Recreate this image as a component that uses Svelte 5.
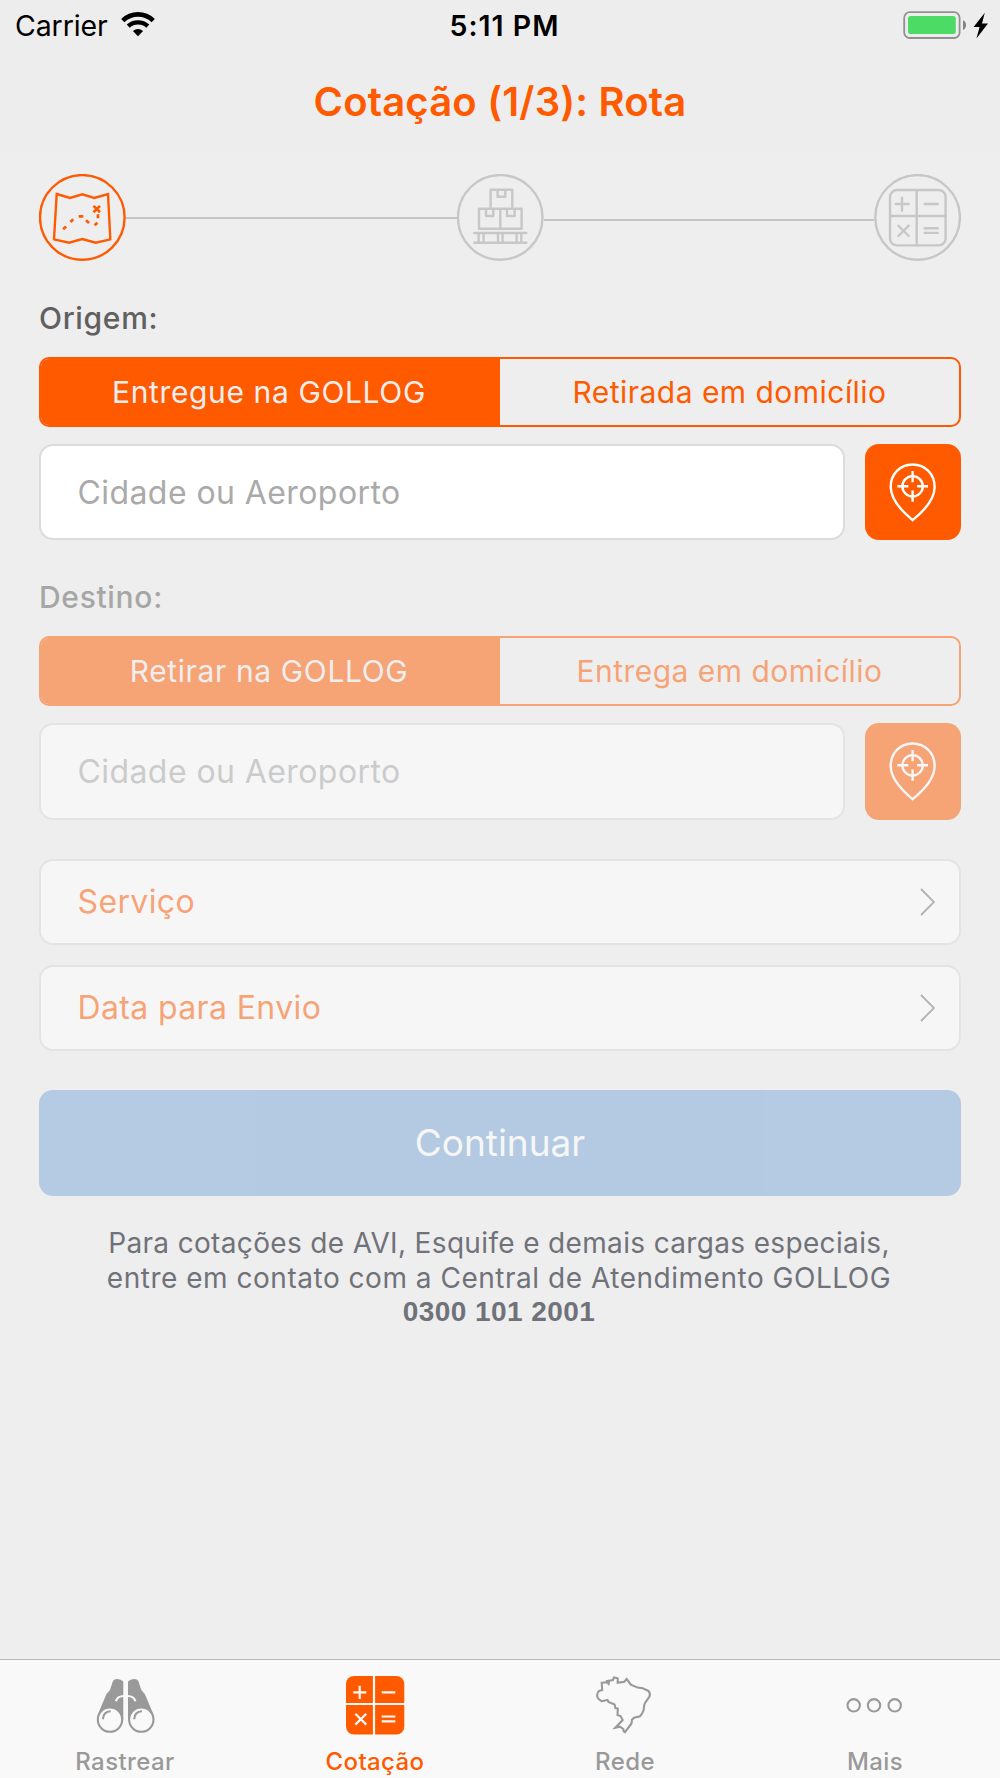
<script>
  let places = [
    {
      label: "Origem:",
      options: ["Entregue na GOLLOG", "Retirada em domicílio"],
      selected: 0,
      city: "",
      disabled: false,
    },
    {
      label: "Destino:",
      options: ["Retirar na GOLLOG", "Entrega em domicílio"],
      selected: 0,
      city: "",
      disabled: true,
    },
  ];

  const rows = ["Serviço", "Data para Envio"];
  const tabs = [
    { id: "track", label: "Rastrear" },
    { id: "quote", label: "Cotação" },
    { id: "network", label: "Rede" },
    { id: "more", label: "Mais" },
  ];

  let activeTab = "quote";
</script>

<div class="screen">
  <header>
    <div class="status">
      <div class="carrier">
        <span>Carrier</span>
        <svg class="wifi" viewBox="0 0 36 26">
          <path d="M2.8 9.6A21.7 21.7 0 0 1 33.2 9.6" stroke-width="4.6" />
          <path d="M8.2 15.2A14.6 14.6 0 0 1 27.8 15.2" stroke-width="4.4" />
          <path class="solid" d="M18 25.2L12.9 20Q18 16 23.1 20Z" />
        </svg>
      </div>
      <span class="time">5:11 PM</span>
      <svg class="battery" viewBox="0 0 87 30">
        <rect x="1.2" y="2.2" width="55.4" height="25.8" rx="5.5" />
        <rect class="level" x="5" y="6" width="47.8" height="18" rx="2.5" />
        <path class="nub" d="M60 10.2Q63 11.5 63 15T60 20Z" />
        <path class="bolt" d="M81.8 2.8L70.6 16.9H76.6L73.4 28.5L85 13.6H79Z" />
      </svg>
    </div>
    <h1>Cotação (1/3): Rota</h1>
  </header>

  <main>
    <div class="stepper">
      <svg class="step current" viewBox="0 0 87 87">
        <circle cx="43.3" cy="43.4" r="42.3" />
        <path d="M17.7 20L31 24L43.3 20.3L55.3 24L69 20L71.3 65.3L56.7 68.7L43.3 65L30 68.7L15 65.3Z" />
        <path class="route" d="M24.1 55.2L27.1 52.4M31.4 47.9L34.3 45.2M39.7 42.3H44.3M47 46.3L50 48.9M55.6 51.3L58.4 48.7M59 40.3V44.3M54.5 31.9L61 38.3M61 31.9L54.5 38.3" />
      </svg>
      <div class="line"></div>
      <svg class="step" viewBox="0 0 87 87">
        <circle cx="43.2" cy="43.4" r="42.3" />
        <path d="M33.6 34.7V15.7H55.3V34.7M40.6 15.7V22.7H48.3V15.7" />
        <path d="M22 34.7H64.6V54.7H22ZM43.3 34.7V54.7M29 34.7V42H36.3V34.7M50 34.7V42H57.6V34.7" />
        <path d="M17.3 59H69.3M17.3 68.7H69.3M21.6 59V68.7M26.6 59V68.7M41 59V68.7M45.6 59V68.7M59.6 59V68.7M64.3 59V68.7" />
      </svg>
      <div class="line lower"></div>
      <svg class="step" viewBox="0 0 87 87">
        <circle cx="43.6" cy="43.4" r="42.3" />
        <rect x="16" y="16" width="55.6" height="55.4" rx="7" />
        <path d="M42.7 16V71.4M16 42H71.6" />
        <path d="M21.7 30H34.7M28 23.7V36.7M50.7 30H63.7M24.3 51.7L34.7 62M34.7 51.7L24.3 62M50.7 54.3H63.7M50.7 58.9H63.7" />
      </svg>
    </div>

    {#each places as place}
      <section class="place" class:disabled={place.disabled}>
        <h2>{place.label}</h2>
        <div class="segmented">
          {#each place.options as option, i}
            <button
              class:selected={place.selected === i}
              disabled={place.disabled}
              on:click={() => (place.selected = i)}>{option}</button
            >
          {/each}
        </div>
        <div class="search">
          <input
            type="text"
            bind:value={place.city}
            disabled={place.disabled}
            placeholder="Cidade ou Aeroporto"
          />
          <button class="locate" disabled={place.disabled} aria-label="Localizar">
            <svg viewBox="0 0 96 97">
              <path d="M47.6 76.1C39.5 69.4 25.7 56.5 25.7 43C25.7 30 35 20.5 47.6 20.5S69.6 30 69.6 43C69.6 56.5 56 69.4 47.6 76.1Z" />
              <circle cx="47.6" cy="42.3" r="10.2" />
              <path d="M32.3 42.3H43.4M52 42.3H63M47.6 27V38.2M47.6 46.6V57.8" />
            </svg>
          </button>
        </div>
      </section>
    {/each}

    <div class="rows">
      {#each rows as row}
        <button class="row" disabled>
          <span>{row}</span>
          <svg viewBox="0 0 15 28"><path d="M1 1L14 14L1 27" /></svg>
        </button>
      {/each}
    </div>

    <button class="continue" disabled>Continuar</button>

    <p class="note">
      <span class="first">Para cotações de AVI, Esquife e demais cargas especiais,</span><br />
      <span class="second">entre em contato com a Central de Atendimento GOLLOG</span><br />
      <strong>0300 101 2001</strong>
    </p>
  </main>

  <nav>
    {#each tabs as tab}
      <button class:active={activeTab === tab.id} on:click={() => (activeTab = tab.id)}>
        <svg viewBox="0 0 60 60">
          {#if tab.id === "track"}
            <path class="fill" d="M28.3 45V6.5Q26 3.9 22 4Q18.5 4 17.6 7L15 15L11.5 19L3 39L8 36L15 33L24 36Z" />
            <path class="fill" d="M33 45V6.5Q35.3 3.9 39.3 4Q42.8 4 43.7 7L46.3 15L49.8 19L58.3 39L53.3 36L46.3 33L37.3 36Z" />
            <circle class="lens" cx="15" cy="44.6" r="12.2" />
            <circle class="lens" cx="46.3" cy="44.6" r="12.2" />
            <path class="cut" d="M20.9 26.2Q22.3 21 29 21H32.3Q39 21 40.4 26.2" />
            <path d="M7.9 44.2Q8.2 36.5 15.6 36.2M39.2 44.2Q39.5 36.5 46.9 36.2" />
          {:else if tab.id === "quote"}
            <rect class="fill" x="1" y="1" width="58.3" height="58.6" rx="8" />
            <path class="cut" d="M29 0V60M0 29H60" />
            <path class="cut" d="M8.3 17.3H21.3M14.7 10.7V24M36.7 17.3H50.3M10.3 38.7L21.3 49.6M21.3 38.7L10.3 49.6M36.7 41.5H50.3M36.7 46.3H50.3" />
          {:else if tab.id === "network"}
            <path d="M6.7 7.7L12 7.3L13.6 8.8L14 6.5L10.8 6.3L18 5L19 2.5L22.7 3.3V7.7L29.3 6.7L31.7 4L35.7 9.7L42.7 12.6L47.7 13.3L53.5 16Q55.6 18 54.5 21.5L50.3 27.7Q49 29 48.7 35Q47.5 38.6 45 41.2L39 42.7L37 44.7L36.5 48.5L30 57.2L28.7 56.4L28.3 54L25 51.7L20.3 52.8L27.7 45L25.5 41L22.5 40L22.8 33.5L20.3 33L19.6 29.5L13.5 27L12.5 25L6.5 26.2Q1.5 23 2.2 20Q2.2 17.5 4 16L7.2 15Z" />
          {:else}
            <circle cx="8.7" cy="30.3" r="6.2" />
            <circle cx="29" cy="30.3" r="6.2" />
            <circle cx="49.7" cy="30.3" r="6.2" />
          {/if}
        </svg>
        <span>{tab.label}</span>
      </button>
    {/each}
  </nav>
</div>

<style>
  :global(body) {
    margin: 0;
    background: #eeeeee;
  }
  .screen {
    display: flex;
    flex-direction: column;
    width: 1000px;
    height: 1778px;
    overflow: hidden;
    font-family: Inter, Roboto, sans-serif;
    background: #eeeeee;
  }
  button,
  input {
    box-sizing: border-box;
    margin: 0;
    padding: 0;
    border: none;
    background: none;
    font-family: inherit;
  }
  svg {
    display: block;
    fill: none;
    stroke: currentColor;
  }
  header {
    height: 153px;
    background: #ededed;
  }
  .status {
    display: grid;
    grid-template-columns: 1fr auto 1fr;
    align-items: center;
    height: 51px;
    padding: 0 10px 0 15px;
    color: #000;
    font-size: 28.5px;
  }
  .carrier {
    display: flex;
    align-items: center;
    gap: 12px;
    letter-spacing: -0.1px;
  }
  .wifi {
    width: 36px;
    height: 26px;
    margin-top: -3px;
  }
  .wifi .solid {
    fill: #000;
    stroke: none;
  }
  .time {
    padding-left: 4px;
    font-weight: 600;
    letter-spacing: 1px;
  }
  .battery {
    width: 87px;
    height: 30px;
    justify-self: end;
    margin-top: -2px;
    stroke: #919191;
    stroke-width: 1.8;
  }
  .battery .level {
    fill: #4cdb64;
    stroke: none;
  }
  .battery .nub {
    fill: #828282;
    stroke: none;
  }
  .battery .bolt {
    fill: #000;
    stroke: none;
  }
  h1 {
    margin: 0;
    text-align: center;
    font-size: 40px;
    font-weight: 600;
    line-height: 102px;
    letter-spacing: 0.17px;
    color: #ff5a00;
  }
  main {
    flex: 1;
    padding: 21px 39px 0;
  }
  .stepper {
    display: flex;
    height: 87px;
  }
  .step {
    width: 87px;
    height: 87px;
    color: #c7c7c7;
    stroke-width: 2.4;
    stroke-linejoin: round;
    stroke-linecap: round;
  }
  .step.current {
    color: #ff5a00;
    stroke-linejoin: miter;
    stroke-linecap: butt;
  }
  .route {
    stroke-width: 2.7;
  }
  .line {
    flex: 1;
    height: 2px;
    margin-top: 43px;
    background: #c4c4c4;
  }
  .line.lower {
    margin-top: 45px;
  }
  .place {
    padding-top: 36px;
  }
  .disabled {
    opacity: 0.5;
  }
  h2 {
    margin: 0 0 17px;
    font-size: 30px;
    font-weight: 500;
    line-height: 43px;
    letter-spacing: 0.68px;
    color: #606060;
  }
  .segmented {
    display: flex;
    box-sizing: border-box;
    height: 70px;
    margin-bottom: 17px;
    border: 2px solid #ff5a00;
    border-radius: 10px;
    overflow: hidden;
  }
  .segmented button {
    width: 50%;
    font-size: 30px;
    letter-spacing: 0.47px;
    color: #ff5a00;
  }
  .segmented .selected {
    padding-right: 3px;
    letter-spacing: 0.62px;
    background: #ff5a00;
    color: #eeeeee;
  }
  .search {
    display: flex;
    justify-content: space-between;
    height: 96.3px;
  }
  input {
    width: 806px;
    padding-left: 36.5px;
    border: 2px solid #dcdcdc;
    border-radius: 14px;
    background: #fff;
    font-size: 32px;
    letter-spacing: 0.42px;
  }
  input::placeholder {
    color: #aaaaaa;
    opacity: 1;
  }
  .locate {
    width: 96px;
    border-radius: 14px;
    background: #ff5a00;
    color: #fff;
    stroke-width: 2.4;
  }
  .rows {
    display: flex;
    flex-direction: column;
    gap: 20px;
    padding: 39px 0;
    opacity: 0.5;
  }
  .row {
    display: flex;
    align-items: center;
    justify-content: space-between;
    height: 86px;
    padding: 0 24px 0 36.5px;
    border: 2px solid #dcdcdc;
    border-radius: 14px;
    background: #fff;
    font-size: 32px;
    letter-spacing: 0.37px;
    color: #ff5a00;
  }
  .row svg {
    width: 15px;
    height: 28px;
    color: #777;
    stroke-width: 1.8;
  }
  .continue {
    display: block;
    width: 100%;
    height: 106.5px;
    border-radius: 14px;
    background: #7aa8d8;
    color: #fff;
    font-size: 37px;
    opacity: 0.5;
  }
  .note {
    margin: 30px -18px 0 -20px;
    text-align: center;
    font-size: 28px;
    line-height: 34.5px;
    color: #70727a;
  }
  .note .first {
    letter-spacing: 0.345px;
  }
  .note .second {
    letter-spacing: 0.52px;
  }
  .note strong {
    position: relative;
    top: -1px;
    font-family: "Liberation Sans", Arial, sans-serif;
    letter-spacing: 0.43px;
  }
  nav {
    display: flex;
    height: 118px;
    border-top: 1px solid #b8b8b8;
    background: #f9f9f9;
  }
  nav button {
    flex: 1;
    display: flex;
    flex-direction: column;
    align-items: center;
    padding-top: 15px;
    color: #999;
    font-size: 24px;
    font-weight: 500;
    letter-spacing: 0.4px;
  }
  nav svg {
    width: 60px;
    height: 60px;
    stroke-width: 2.1;
  }
  nav span {
    margin-top: 12px;
    line-height: 30px;
  }
  nav .active {
    color: #ff5a00;
  }
  nav .fill {
    fill: currentColor;
    stroke: none;
  }
  nav .cut {
    stroke: #f9f9f9;
    stroke-width: 2.2;
  }
  nav .lens {
    fill: #f9f9f9;
  }
</style>
